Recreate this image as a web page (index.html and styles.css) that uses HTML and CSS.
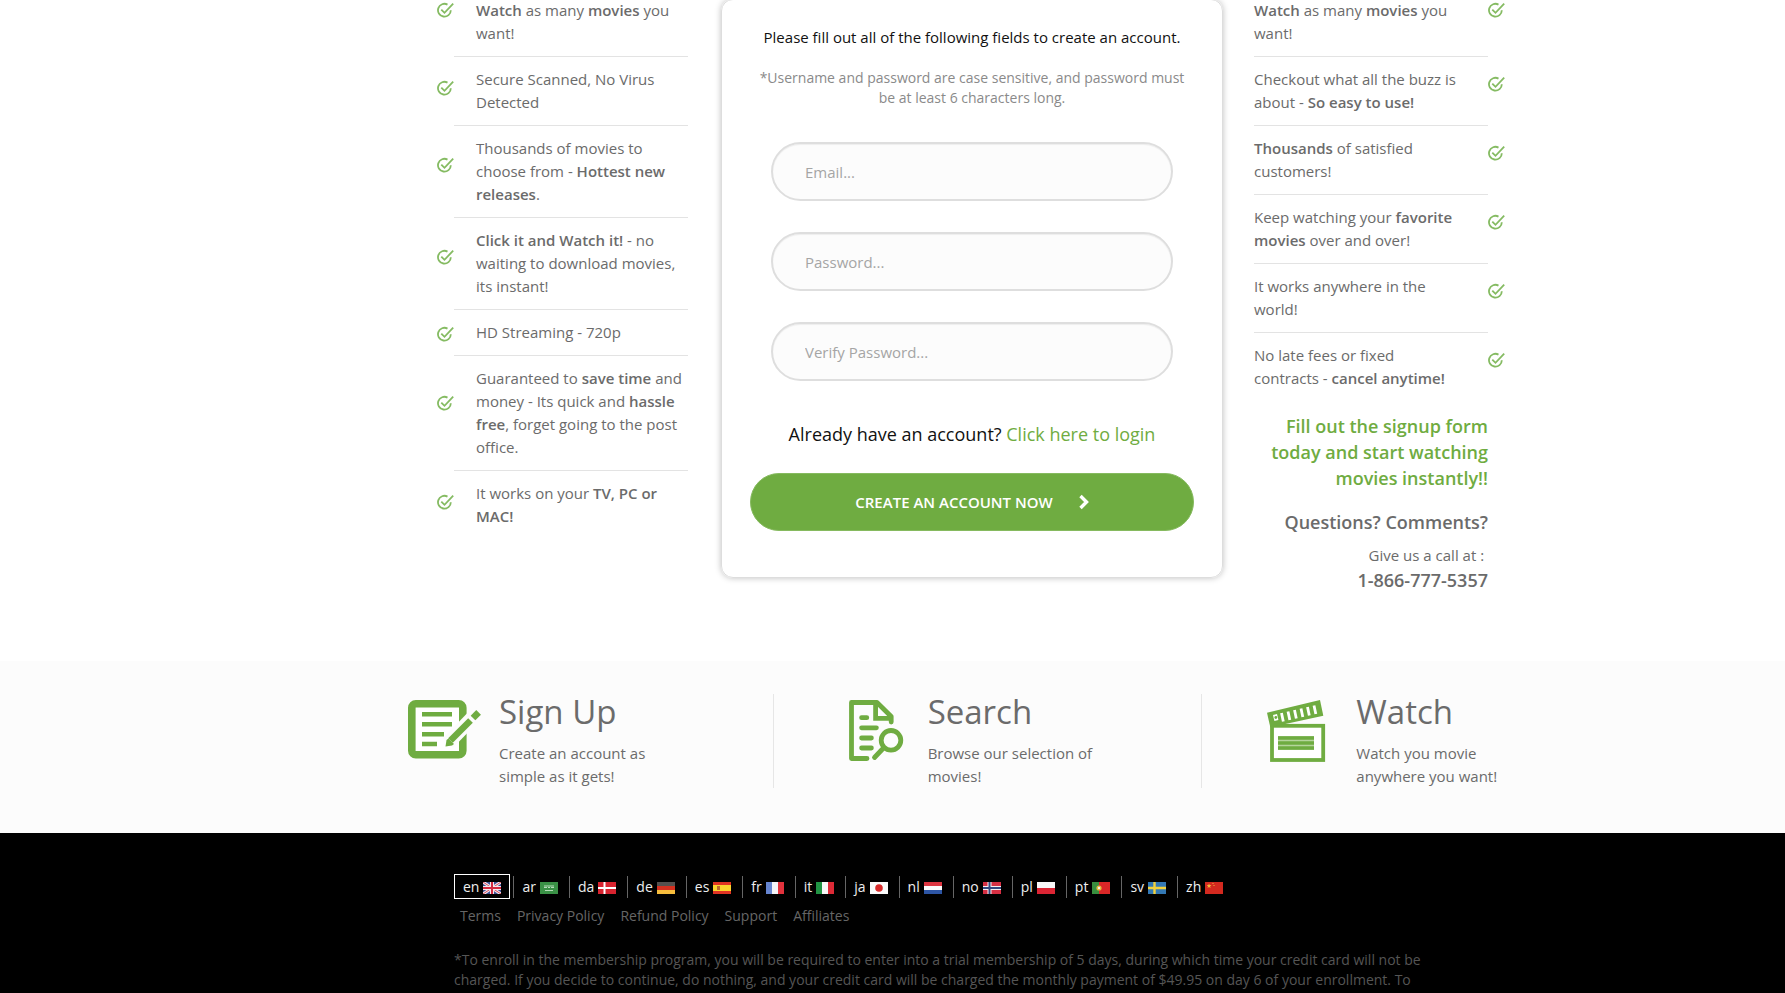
FILE: index.html
```html
<!DOCTYPE html>
<html lang="en">
<head>
    <meta charset="UTF-8">
    <meta name="viewport" content="width=device-width, initial-scale=1.0">
    <title>Create an Account</title>
    <link rel="stylesheet" href="styles.css">
</head>
<body>

<!-- shared icons -->
<svg class="sprite" aria-hidden="true">
    <symbol id="tick" viewBox="0 0 17 17">
        <path d="M10.5 2.6A6.4 6.4 0 1 0 13.8 8.2M4.3 7.6l3.2 3.2L16.2 1.6" fill="none" stroke="#85bb62" stroke-width="1.8"/>
    </symbol>
</svg>

<main class="signup">
    <ul class="benefits">
        <li><span class="tick"><svg><use href="#tick"/></svg></span><p><b>Watch</b> as many <b>movies</b> you want!</p></li>
        <li><span class="tick"><svg><use href="#tick"/></svg></span><p>Secure Scanned, No Virus Detected</p></li>
        <li><span class="tick"><svg><use href="#tick"/></svg></span><p>Thousands of movies to choose from - <b>Hottest new releases</b>.</p></li>
        <li><span class="tick"><svg><use href="#tick"/></svg></span><p><b>Click it and Watch it!</b> - no waiting to download movies, its instant!</p></li>
        <li><span class="tick"><svg><use href="#tick"/></svg></span><p>HD Streaming - 720p</p></li>
        <li><span class="tick"><svg><use href="#tick"/></svg></span><p>Guaranteed to <b>save time</b> and money - Its quick and <b>hassle free</b>, forget going to the post office.</p></li>
        <li><span class="tick"><svg><use href="#tick"/></svg></span><p>It works on your <b>TV, PC or MAC!</b></p></li>
    </ul>

    <form class="card">
        <h4>Please fill out all of the following fields to create an account.</h4>
        <p class="note">*Username and password are case sensitive, and password must be at least 6 characters long.</p>
        <div class="fields">
            <input type="email" aria-label="Email" placeholder="Email...">
            <input type="password" aria-label="Password" placeholder="Password...">
            <input type="password" aria-label="Verify Password" placeholder="Verify Password...">
        </div>
        <p class="login">Already have an account? <a href="#">Click here to login</a></p>
        <button type="submit" class="create">
            CREATE AN ACCOUNT NOW
            <svg width="10" height="16" viewBox="0 0 10 16"><path d="M1.5 2l6 6-6 6" fill="none" stroke="#fff" stroke-width="3.4"/></svg>
        </button>
    </form>

    <div class="side">
        <ul class="benefits right">
            <li><p><b>Watch</b> as many <b>movies</b> you want!</p><span class="tick"><svg><use href="#tick"/></svg></span></li>
            <li><p>Checkout what all the buzz is about - <b>So easy to use!</b></p><span class="tick"><svg><use href="#tick"/></svg></span></li>
            <li><p><b>Thousands</b> of satisfied customers!</p><span class="tick"><svg><use href="#tick"/></svg></span></li>
            <li><p>Keep watching your <b>favorite movies</b> over and over!</p><span class="tick"><svg><use href="#tick"/></svg></span></li>
            <li><p>It works anywhere in the world!</p><span class="tick"><svg><use href="#tick"/></svg></span></li>
            <li><p>No late fees or fixed contracts - <b>cancel anytime!</b></p><span class="tick"><svg><use href="#tick"/></svg></span></li>
        </ul>
        <div class="contact">
            <h3 class="promo">Fill out the signup form today and start watching movies instantly!!</h3>
            <h3>Questions? Comments?</h3>
            <p>Give us a call at :&nbsp;</p>
            <p class="phone">1-866-777-5357</p>
        </div>
    </div>
</main>

<section class="steps">
    <div class="step">
        <svg width="74" height="66" viewBox="0 0 74 66">
            <rect x="4.8" y="5.8" width="51" height="51" rx="4" fill="#fff" stroke="#6fac41" stroke-width="7.6"/>
            <path d="M15 16.3h30M15 26.3h30M15 36.2h22M15 46h15" stroke="#6fac41" stroke-width="4.6"/>
            <path d="M41 45L70 15" stroke="#fcfcfc" stroke-width="14"/>
            <path d="M43.500 42.500L63.500 22.500" stroke="#6fac41" stroke-width="6.6"/>
            <path d="M66 20l5.600-5.600" stroke="#6fac41" stroke-width="6.6"/>
            <path d="M38.500 48.500l1-6.500 2-1.500 5.500 5.500-2 1.500z" fill="#6fac41"/>
        </svg>
        <div>
            <h2>Sign Up</h2>
            <p>Create an account as simple as it gets!</p>
        </div>
    </div>
    <div class="step">
        <svg width="74" height="66" viewBox="0 0 74 66" fill="none" stroke="#6fac41" stroke-width="4.8">
            <path d="M31 60.5H15.5v-56H41L55.2 18.5V24" stroke-linecap="round" stroke-linejoin="round"/>
            <path d="M39.6 4V20.3H56"/>
            <path d="M41 4l15 16" stroke-width="3"/>
            <path d="M25.6 19.7h5.2M25.6 29.8h14.8M25.6 40h9.8M25.6 50h9.8" stroke-linecap="round"/>
            <circle cx="55" cy="42.3" r="9.8"/>
            <path d="M47.5 50L38.5 59.5" stroke-linecap="round"/>
        </svg>
        <div>
            <h2>Search</h2>
            <p>Browse our selection of movies!</p>
        </div>
    </div>
    <div class="step">
        <svg width="74" height="66" viewBox="0 0 74 66">
            <rect x="8" y="27.8" width="51.2" height="34.2" fill="#fff" stroke="#6fac41" stroke-width="3.8"/>
            <path d="M14 38h36v14H14z" fill="#b5d59c"/>
            <path d="M14 40h36M14 45h36M14 50h36" stroke="#6fac41" stroke-width="3.600"/>
            <path d="M3 14.7L56 2l3.3 15.7L6.3 29.3z" fill="#6fac41"/>
            <path d="M17.500 15l1.800 8.500M24 13.500l1.800 8.500M30.500 12l1.800 8.500M37 10.500l1.800 8.500M43.500 9l1.800 8.500M50 7.500l1.800 8.500" stroke="#fff" stroke-width="2.8"/>
            <path d="M9 17l4-1 1.4 6-4 1z" fill="#fff"/>
            <circle cx="11.8" cy="19.5" r="1.4" fill="#6fac41"/>
        </svg>
        <div>
            <h2>Watch</h2>
            <p>Watch you movie anywhere you want!</p>
        </div>
    </div>
</section>

<footer class="footer">
    <ul class="languages">
        <li><a href="#" class="active">en <svg viewBox="0 0 18 12"><path fill="#3d4f93" d="M0 0h18v12H0z"/><path d="M0 0l18 12M18 0L0 12" stroke="#f3e9ee" stroke-width="3"/><path d="M0 0l18 12M18 0L0 12" stroke="#d8485a"/><path d="M9 0v12M0 6h18" stroke="#f3e9ee" stroke-width="4"/><path d="M9 0v12M0 6h18" stroke="#d5293f" stroke-width="2"/></svg></a></li>
        <li><a href="#">ar <svg viewBox="0 0 18 12"><path fill="#3a9146" d="M0 0h18v12H0z"/><path d="M4 4h10M4 5.5h3M8 5.5h2M11 5.5h3M5 8.5h8" stroke="#b5dcb9"/></svg></a></li>
        <li><a href="#">da <svg viewBox="0 0 18 12"><path fill="#d8232f" d="M0 0h18v12H0z"/><path d="M6.500 0v12M0 6h18" stroke="#fff" stroke-width="2"/></svg></a></li>
        <li><a href="#">de <svg viewBox="0 0 18 12"><path fill="#55504e" d="M0 0h18v4H0z"/><path fill="#d5301f" d="M0 4h18v4H0z"/><path fill="#f7bd3c" d="M0 8h18v4H0z"/></svg></a></li>
        <li><a href="#">es <svg viewBox="0 0 18 12"><path fill="#e03423" d="M0 0h18v12H0z"/><path fill="#fbd42d" d="M0 3h18v6H0z"/><path fill="#bd6a2c" d="M4 4h3v4H4z"/></svg></a></li>
        <li><a href="#">fr <svg viewBox="0 0 18 12"><path fill="#6685d0" d="M0 0h6v12H0z"/><path fill="#f4f4f8" d="M6 0h6v12H6z"/><path fill="#e2323c" d="M12 0h6v12h-6z"/></svg></a></li>
        <li><a href="#">it <svg viewBox="0 0 18 12"><path fill="#219343" d="M0 0h6v12H0z"/><path fill="#f8f8f8" d="M6 0h6v12H6z"/><path fill="#dd2a36" d="M12 0h6v12h-6z"/></svg></a></li>
        <li><a href="#">ja <svg viewBox="0 0 18 12"><path fill="#fbfbfb" d="M0 0h18v12H0z"/><circle cx="9" cy="6" r="3.800" fill="#d92b2b"/></svg></a></li>
        <li><a href="#">nl <svg viewBox="0 0 18 12"><path fill="#dc3540" d="M0 0h18v4H0z"/><path fill="#fafafa" d="M0 4h18v4H0z"/><path fill="#2d55a5" d="M0 8h18v4H0z"/></svg></a></li>
        <li><a href="#">no <svg viewBox="0 0 18 12"><path fill="#d62f43" d="M0 0h18v12H0z"/><path d="M6.500 0v12M0 6h18" stroke="#f5eef2" stroke-width="4"/><path d="M6.500 0v12M0 6h18" stroke="#32477f" stroke-width="2"/></svg></a></li>
        <li><a href="#">pl <svg viewBox="0 0 18 12"><path fill="#f8f8f8" d="M0 0h18v6H0z"/><path fill="#dc2534" d="M0 6h18v6H0z"/></svg></a></li>
        <li><a href="#">pt <svg viewBox="0 0 18 12"><path fill="#388e3e" d="M0 0h7v12H0z"/><path fill="#da2727" d="M7 0h11v12H7z"/><circle cx="7" cy="6" r="2.600" fill="#e2b93b"/><circle cx="7" cy="6" r="1.200" fill="#eee"/></svg></a></li>
        <li><a href="#">sv <svg viewBox="0 0 18 12"><path fill="#3378b4" d="M0 0h18v12H0z"/><path d="M6.500 0v12M0 6h18" stroke="#f3d23c" stroke-width="2.400"/></svg></a></li>
        <li><a href="#">zh <svg viewBox="0 0 18 12"><path fill="#d3291f" d="M0 0h18v12H0z"/><path fill="#f2b63a" d="M4 1.500l.7 1.600h1.700L5.100 4.200l.5 1.700L4 4.900 2.500 5.900l.5-1.700L1.700 3.100h1.700zM7.500 1h1v1h-1zM8.500 3h1v1h-1z"/></svg></a></li>
    </ul>
    <nav class="links">
        <a href="#">Terms</a>
        <a href="#">Privacy Policy</a>
        <a href="#">Refund Policy</a>
        <a href="#">Support</a>
        <a href="#">Affiliates</a>
    </nav>
    <p class="terms">*To enroll in the membership program, you will be required to enter into a trial membership of 5 days, during which time your credit card will not be charged. If you decide to continue, do nothing, and your credit card will be charged the monthly payment of $49.95 on day 6 of your enrollment. To</p>
</footer>

</body>
</html>
```
FILE: styles.css
```css
* {
    box-sizing: border-box;
}
body {
    font-family: "Open Sans", sans-serif;
    font-size: 15px;
    line-height: 23px;
    color: #6b6b6b;
    background-color: #fff;
    margin: 0;
    min-height: 100vh;
    display: flex;
    flex-direction: column;
}
h2, h3, h4, p, ul {
    margin: 0;
    padding: 0;
    font-size: inherit;
    font-weight: 400;
}
ul {
    list-style: none;
}
a {
    color: #6fac41;
    text-decoration: none;
}
b {
    font-weight: 600;
}
.sprite {
    display: none;
}

/* signup area */
.signup {
    display: flex;
    align-items: flex-start;
    margin-top: -12px;
    padding: 0 280px 68px 437px;
}
.benefits {
    width: 251px;
    flex-shrink: 0;
}
.benefits li {
    display: flex;
}
.benefits p {
    flex: 1;
    padding: 11px 0 11px 22px;
    border-bottom: 1px solid #e3e3e3;
}
.benefits li:last-child p {
    border-bottom: 0;
}
.tick {
    display: flex;
    flex-direction: column;
    width: 17px;
    padding-top: 9px;
}
.tick::before {
    content: "";
    flex: 1;
}
.tick::after {
    content: "";
    flex: 2;
}
.tick svg {
    width: 17px;
    height: 17px;
}
.benefits.right p {
    padding-left: 0;
    padding-right: 28px;
}
.right .tick {
    padding-top: 3px;
}
.benefits li:first-child .tick {
    padding-top: 14px;
}
.benefits li:first-child .tick::before {
    display: none;
}
.card {
    flex: 1;
    margin: 11px 31px 0 33px;
    padding: 26px 28px 46px;
    text-align: center;
    border: 1px solid #ddd;
    border-radius: 12px;
    box-shadow: 0 0 6px rgba(0, 0, 0, 0.25);
}
.card h4 {
    color: #111;
}
.note {
    margin-top: 19px;
    font-size: 14px;
    line-height: 20px;
    color: #8a8a8a;
}
.fields {
    display: flex;
    flex-direction: column;
    gap: 31px;
    margin: 34px 21px 0;
}
.fields input {
    width: 100%;
    height: 59px;
    padding: 0 32px;
    font: inherit;
    color: #555;
    background-color: #fcfcfc;
    border: 2px solid #dedede;
    border-radius: 30px;
    box-shadow: inset 0 1px 1px rgba(0, 0, 0, 0.06);
}
.fields input::placeholder {
    color: #a5a5a5;
}
.login {
    margin-top: 40px;
    font-size: 18px;
    line-height: 26px;
    color: #111;
}
.create {
    display: flex;
    justify-content: center;
    align-items: center;
    gap: 26px;
    width: 100%;
    height: 58px;
    margin-top: 26px;
    font-family: inherit;
    font-size: 15px;
    font-weight: 600;
    color: #fff;
    background-color: #6fac41;
    border: 1px solid #86ba5f;
    border-radius: 30px;
    cursor: pointer;
}
.side {
    width: 251px;
    flex-shrink: 0;
}
.contact {
    padding-right: 17px;
    text-align: right;
}
.contact h3 {
    margin-bottom: 9px;
    font-size: 18px;
    line-height: 26px;
    font-weight: 600;
}
.contact .promo {
    margin: 12px 0 18px;
    color: #6fac41;
}
.phone {
    font-size: 18px;
    line-height: 26px;
    font-weight: 600;
}

/* three steps */
.steps {
    display: grid;
    grid-template-columns: repeat(3, 1fr);
    padding: 33px 154px 45px 345px;
    background-color: #fcfcfc;
}
.step {
    display: flex;
    align-items: flex-start;
    gap: 18px;
    padding-left: 62px;
    border-right: 1px solid #e6e6e6;
}
.step:last-child {
    border-right: 0;
}
.step svg {
    flex-shrink: 0;
    margin-top: 4px;
}
.step h2 {
    font-size: 33px;
    line-height: 36px;
}
.step p {
    width: 180px;
    margin-top: 12px;
}

/* footer */
.footer {
    flex: 1;
    padding: 41px 297px 0 454px;
    font-size: 14px;
    line-height: 20px;
    color: #555;
    background-color: #000;
}
.languages {
    display: flex;
    flex-wrap: wrap;
}
.languages li {
    display: flex;
    align-items: center;
    height: 25px;
    padding-right: 3px;
}
.languages li + li::before {
    content: "";
    width: 1px;
    height: 22px;
    background-color: #666;
}
.languages a {
    display: flex;
    align-items: center;
    gap: 4px;
    height: 25px;
    padding: 0 8px;
    color: #eee;
}
.languages .active {
    border: 1px solid #fff;
}
.languages svg {
    width: 18px;
    height: 12px;
    margin-top: 2px;
}
.links {
    display: flex;
    gap: 16px;
    margin-top: 7px;
    padding-left: 6px;
}
.links a {
    color: #666;
}
.terms {
    margin-top: 24px;
    padding-right: 24px;
}
```
